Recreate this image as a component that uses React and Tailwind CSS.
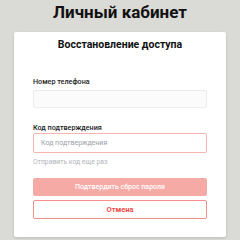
export default function App() {
  return (
    <div className="w-[240px] h-[240px] bg-[#dadad6] overflow-hidden" style={{ fontFamily: 'Roboto, "Noto Sans", sans-serif' }}>
      <h1 className="text-center text-[17px] leading-[22px] font-bold text-[#111] pt-[1px]">Личный кабинет</h1>
      <div className="mx-[14px] mt-[9px] bg-white rounded-[2px] shadow-[0_1px_3px_rgba(0,0,0,0.15)] px-[19px] pt-[6px] pb-[18px]">
        <h2 className="text-center text-[10.5px] leading-[14px] font-bold text-[#111]">Восстановление доступа</h2>
        <div className="mt-[24px] text-[7.2px] leading-[11px] font-medium text-[#222]">Номер телефона</div>
        <div className="mt-[3px] h-[18px] border border-[#ececec] bg-[#fbfbfb] rounded-[2px]"></div>
        <div className="mt-[14px] text-[7.2px] leading-[11px] font-medium text-[#222]">Код подтверждения</div>
        <div className="mt-[0px] h-[20px] border border-[#f5b5b0] rounded-[2px] flex items-center px-[7px] text-[7px] text-[#9aa0a8]">Код подтверждения</div>
        <div className="mt-[4px] text-[6.8px] leading-[10px] text-[#b0b4ba]">Отправить код еще раз</div>
        <div className="mt-[11px] h-[18px] bg-[#f5aaa5] rounded-[2px] flex items-center justify-center text-[7px] font-medium text-white">Подтвердить сброс пароля</div>
        <div className="mt-[4px] h-[19px] border border-[#f6908b] rounded-[2px] flex items-center justify-center text-[7.5px] font-bold text-[#ef4b45]">Отмена</div>
      </div>
    </div>
  );
}
